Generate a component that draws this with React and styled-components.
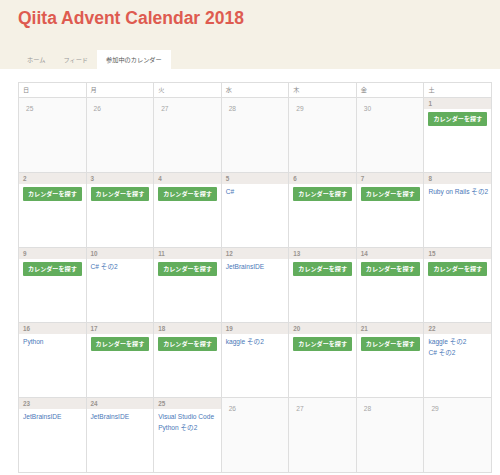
import React from "react";
import styled, { createGlobalStyle } from "styled-components";

const Global = createGlobalStyle`
  html, body { margin: 0; padding: 0; background: #fff; }
  body { font-family: "Liberation Sans", "Noto Sans CJK JP", sans-serif; }
`;

const Header = styled.header`
  background: #f5f1e6;
  padding: 8px 18px 0;
`;

const Title = styled.h1`
  margin: 0;
  font-size: 17.5px;
  line-height: 20px;
  font-weight: 700;
  color: #de5b50;
`;

const Tabs = styled.nav`
  display: flex;
  margin-top: 22px;
`;

const Tab = styled.div`
  padding: 0 9px;
  height: 19px;
  line-height: 19px;
  font-size: 6.2px;
  color: ${(p) => (p.$active ? "#555" : "#999")};
  background: ${(p) => (p.$active ? "#fff" : "transparent")};
`;

const Main = styled.main`
  padding: 13px 8px 0 18px;
`;

const Grid = styled.div`
  display: grid;
  grid-template-columns: repeat(7, 1fr);
  grid-template-rows: 15px repeat(5, 75px);
  width: 474px;
  box-sizing: border-box;
  border-top: 1px solid #dedede;
  border-left: 1px solid #dedede;
`;

const HeadCell = styled.div`
  border-right: 1px solid #dedede;
  border-bottom: 1px solid #dedede;
  padding-left: 4px;
  font-size: 6.2px;
  line-height: 14px;
  color: #888;
`;

const Cell = styled.div`
  border-right: 1px solid #dedede;
  border-bottom: 1px solid #dedede;
  background: ${(p) => (p.$out ? "#fafafa" : "#fff")};
  display: flex;
  flex-direction: column;
  align-items: flex-start;
  min-width: 0;
`;

const Band = styled.div`
  align-self: stretch;
  height: 11px;
  line-height: 11px;
  background: #efebe8;
  padding-left: 4px;
  font-size: 6.3px;
  font-weight: 700;
  color: #9a948f;
`;

const OutNum = styled.div`
  padding: 6px 0 0 7px;
  font-size: 6.6px;
  line-height: 9px;
  color: #a5a5a5;
`;

const Button = styled.span`
  margin: 3px 0 0 4px;
  height: 14px;
  line-height: 14px;
  padding: 0 5px;
  background: #62ad5c;
  border-radius: 1px;
  color: #fff;
  font-size: 6.1px;
  font-weight: 700;
  white-space: nowrap;
`;

const Links = styled.div`
  padding: 2px 4px 0;
  display: flex;
  flex-direction: column;
`;

const Link = styled.a`
  font-size: 6.6px;
  line-height: 11px;
  color: #4a78b8;
  text-decoration: none;
  white-space: nowrap;
`;

const B = "btn";
const weeks = [
  [[25], [26], [27], [28], [29], [30], [1, B]],
  [[2, B], [3, B], [4, B], [5, ["C#"]], [6, B], [7, B], [8, ["Ruby on Rails その2"]]],
  [[9, B], [10, ["C# その2"]], [11, B], [12, ["JetBrainsIDE"]], [13, B], [14, B], [15, B]],
  [[16, ["Python"]], [17, B], [18, B], [19, ["kaggle その2"]], [20, B], [21, B], [22, ["kaggle その2", "C# その2"]]],
  [[23, ["JetBrainsIDE"]], [24, ["JetBrainsIDE"]], [25, ["Visual Studio Code", "Python その2"]], [26], [27], [28], [29]],
];

const days = ["日", "月", "火", "水", "木", "金", "土"];

export default function App() {
  return (
    <>
      <Global />
      <Header>
        <Title>Qiita Advent Calendar 2018</Title>
        <Tabs>
          <Tab>ホーム</Tab>
          <Tab>フィード</Tab>
          <Tab $active>参加中のカレンダー</Tab>
        </Tabs>
      </Header>
      <Main>
        <Grid>
          {days.map((d) => (
            <HeadCell key={d}>{d}</HeadCell>
          ))}
          {weeks.flatMap((w, wi) =>
            w.map(([n, content], di) => {
              const key = `${wi}-${di}`;
              if (content === undefined) {
                return (
                  <Cell key={key} $out>
                    <OutNum>{n}</OutNum>
                  </Cell>
                );
              }
              return (
                <Cell key={key}>
                  <Band>{n}</Band>
                  {content === B ? (
                    <Button>カレンダーを探す</Button>
                  ) : (
                    <Links>
                      {content.map((t, i) => (
                        <Link key={i} href="#">
                          {t}
                        </Link>
                      ))}
                    </Links>
                  )}
                </Cell>
              );
            })
          )}
        </Grid>
      </Main>
    </>
  );
}
